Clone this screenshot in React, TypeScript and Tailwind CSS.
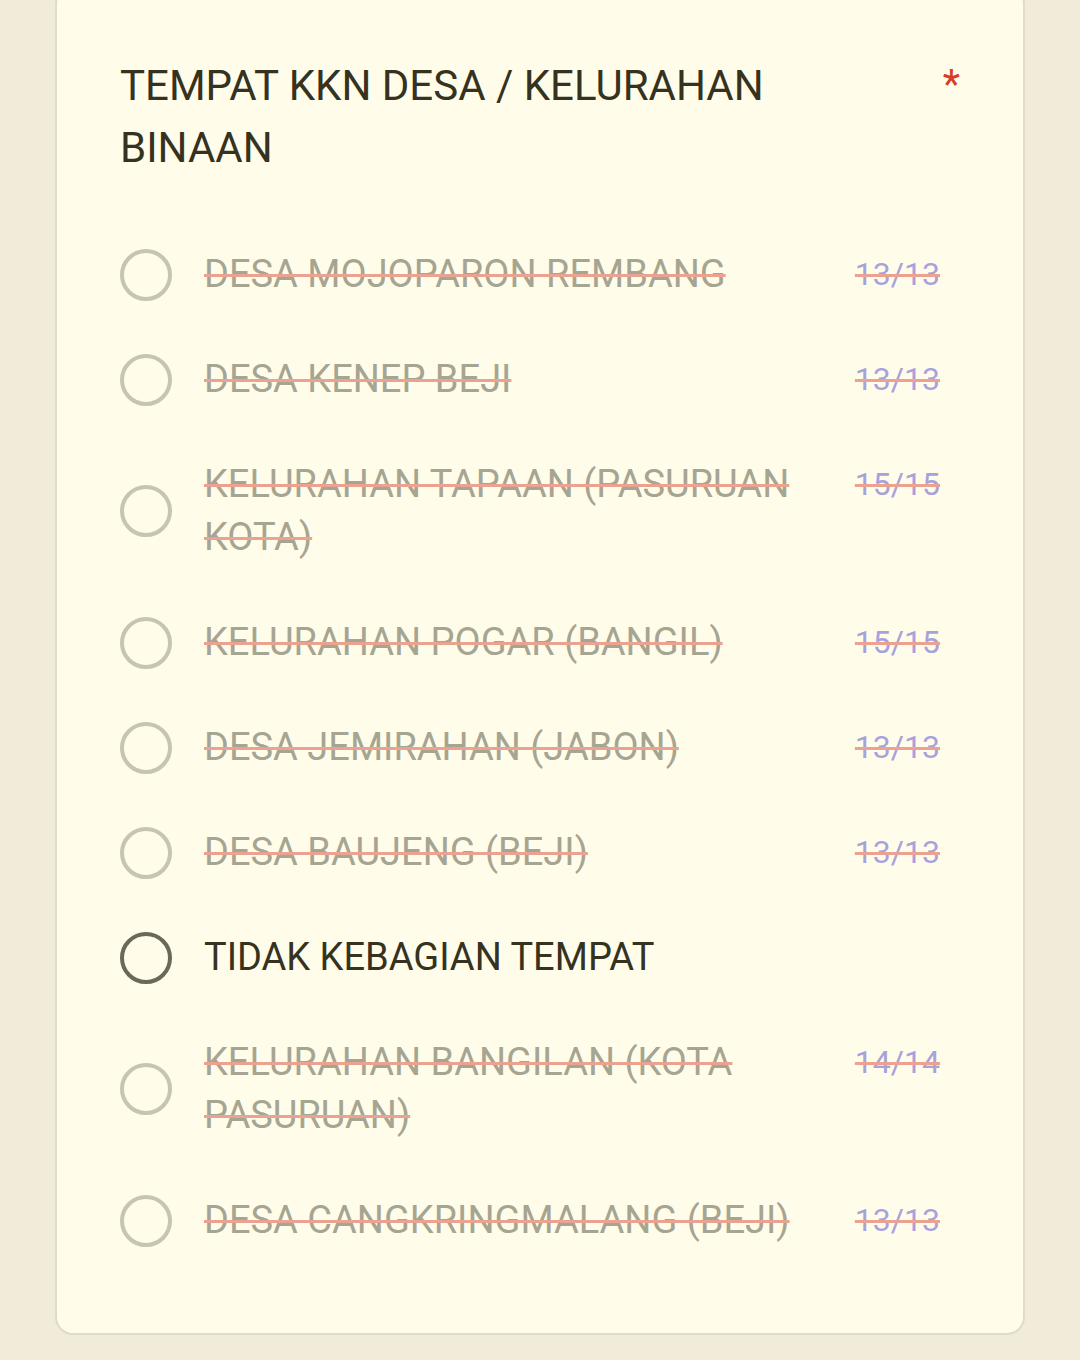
import React from "react";

type Opt = { label: string; count?: string; disabled: boolean };

const options: Opt[] = [
  { label: "DESA MOJOPARON REMBANG", count: "13/13", disabled: true },
  { label: "DESA KENEP BEJI", count: "13/13", disabled: true },
  { label: "KELURAHAN TAPAAN (PASURUAN KOTA)", count: "15/15", disabled: true },
  { label: "KELURAHAN POGAR (BANGIL)", count: "15/15", disabled: true },
  { label: "DESA JEMIRAHAN (JABON)", count: "13/13", disabled: true },
  { label: "DESA BAUJENG (BEJI)", count: "13/13", disabled: true },
  { label: "TIDAK KEBAGIAN TEMPAT", disabled: false },
  { label: "KELURAHAN BANGILAN (KOTA PASURUAN)", count: "14/14", disabled: true },
  { label: "DESA CANGKRINGMALANG (BEJI)", count: "13/13", disabled: true },
];

export default function App() {
  return (
    <div
      className="w-[1080px] h-[1360px] bg-[#f1ebd9] overflow-hidden px-[55px]"
      style={{ fontFamily: "Roboto, 'Liberation Sans', sans-serif" }}
    >
      <div className="mt-[-14px] w-[970px] rounded-[18px] border-2 border-[#e0dcc8] bg-[#fffde9] pl-[63px] pr-[63px] pt-[67px] pb-[86px]">
        <div className="flex items-start justify-between">
          <h1 className="w-[720px] text-[42px] leading-[62px] font-normal text-[#35321f]">
            TEMPAT KKN DESA / KELURAHAN BINAAN
          </h1>
          <span className="text-[40px] leading-[44px] mt-[8px] mr-[0px] text-[#d93b25]">*</span>
        </div>
        <div className="mt-[69px] flex flex-col gap-[52px]">
          {options.map((o) => (
            <div key={o.label} className="flex items-center">
              <div
                className={`w-[52px] h-[52px] shrink-0 rounded-full border-[4px] ${
                  o.disabled ? "border-[#c6c4b2]" : "border-[#6a6859]"
                }`}
              />
              <div className="ml-[32px] flex flex-1 items-start">
                <div
                  className={`w-[620px] text-[38px] leading-[53px] ${
                    o.disabled
                      ? "text-[#a6a592] line-through decoration-[#eba291] decoration-[3px]"
                      : "text-[#35321f]"
                  }`}
                >
                  {o.label}
                </div>
                {o.count && (
                  <div className="ml-auto mr-[20px] text-[32px] leading-[53px] text-[#a8a2dc] line-through decoration-[#eba291] decoration-[3px]">
                    {o.count}
                  </div>
                )}
              </div>
            </div>
          ))}
        </div>
      </div>
    </div>
  );
}
